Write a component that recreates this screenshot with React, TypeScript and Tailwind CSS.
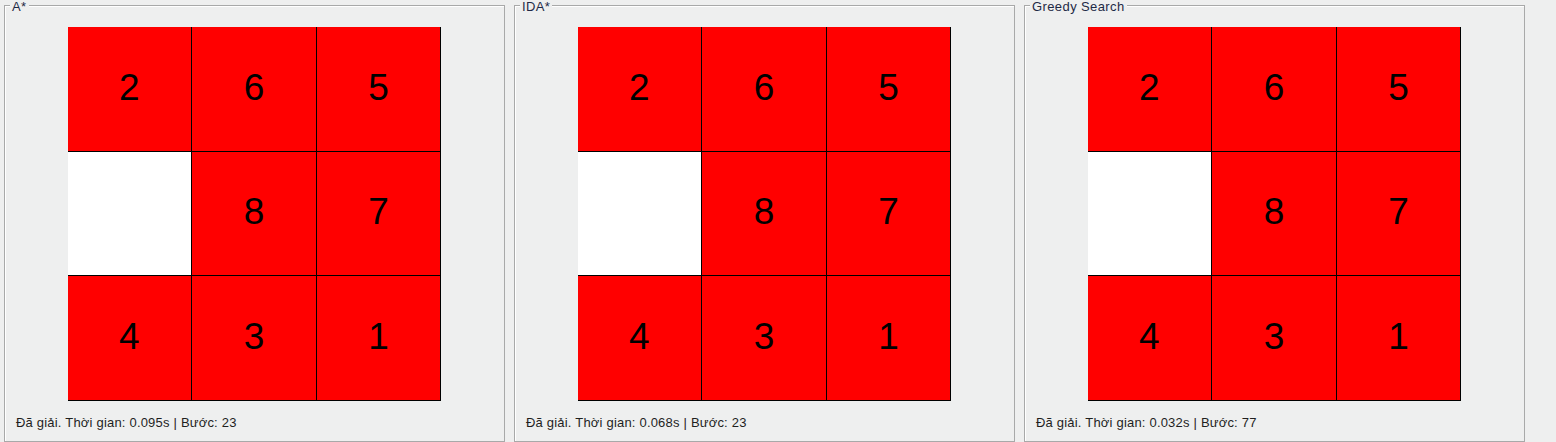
const boards = [
  { title: 'A*', time: '0.095s', steps: 23 },
  { title: 'IDA*', time: '0.068s', steps: 23 },
  { title: 'Greedy Search', time: '0.032s', steps: 77 },
]

const tiles = [2, 6, 5, 0, 8, 7, 4, 3, 1]

function Board({ title, time, steps }: { title: string; time: string; steps: number }) {
  return (
    <div className="relative flex flex-col w-[501px] h-[437px] border border-[#a8a9a9] shadow-[inset_1px_1px_0_#ffffff]">
      {/* group title */}
      <span className="absolute left-[5px] -top-[7px] px-[2px] bg-[#eeefef] text-[13px] leading-[15px] tracking-[0.4px] text-[#1e2a46] font-['Liberation_Sans',Arial,sans-serif]">
        {title}
      </span>

      {/* puzzle */}
      <div className="mt-[21px] mx-auto w-[374px] h-[374px] grid grid-cols-3 grid-rows-3">
        {tiles.map((n, i) => (
          <div
            key={i}
            className={`flex items-center justify-center pb-[3px] border-r border-b border-black text-[37px] leading-none text-black font-['Liberation_Sans',Arial,sans-serif] ${
              n === 0 ? 'bg-white' : 'bg-[#ff0000]'
            }`}
          >
            {n === 0 ? '' : n}
          </div>
        ))}
      </div>

      {/* status */}
      <div className="mt-[14px] pl-[11px] text-[13px] leading-[15px] tracking-[0.2px] text-[#1f1f1f] font-['Liberation_Sans',Arial,sans-serif]">
        Đã giải. Thời gian: {time} | Bước: {steps}
      </div>
    </div>
  )
}

export default function App() {
  return (
    <div className="w-full h-[442px] overflow-hidden bg-[#eeefef] flex gap-[9px] pl-[4px] pt-[5px]">
      {boards.map((b) => (
        <Board key={b.title} {...b} />
      ))}
    </div>
  )
}
